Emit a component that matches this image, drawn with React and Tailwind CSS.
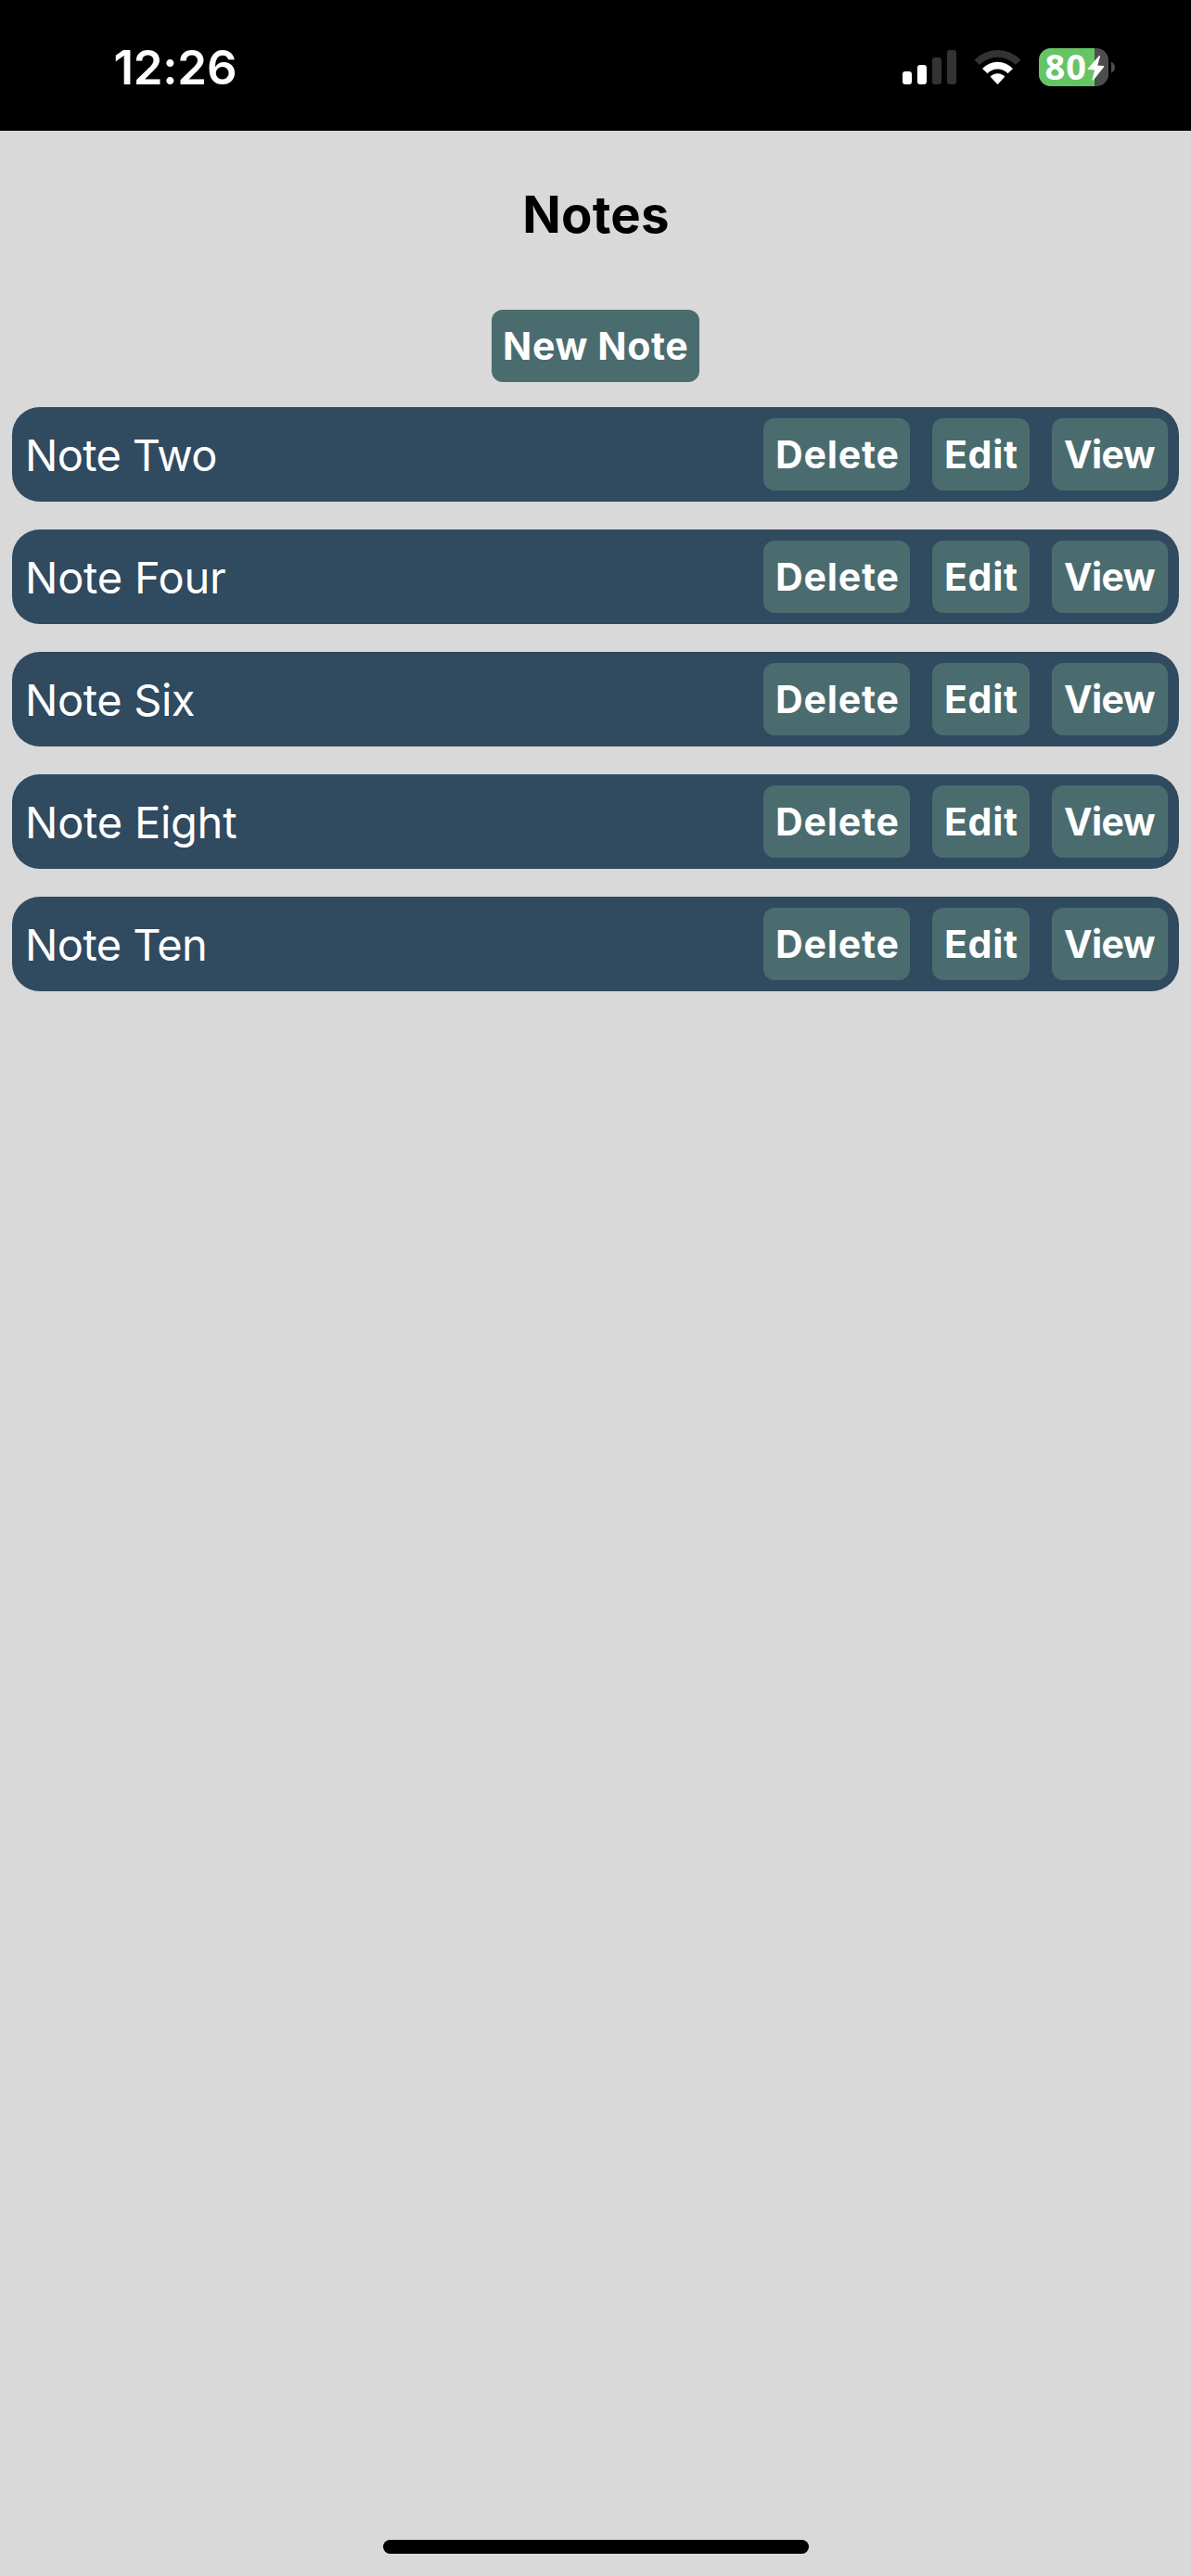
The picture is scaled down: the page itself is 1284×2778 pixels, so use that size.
const notes = [
  { title: 'Note Two', tracking: 'tracking-[-0.7px]' },
  { title: 'Note Four', tracking: 'tracking-[-0.25px]' },
  { title: 'Note Six', tracking: 'tracking-[-0.4px]' },
  { title: 'Note Eight', tracking: 'tracking-[-0.25px]' },
  { title: 'Note Ten', tracking: 'tracking-[-0.6px]' },
];

function Button({ className, children }) {
  return (
    <button
      type="button"
      className={`flex h-[78px] shrink-0 items-center rounded-[12px] bg-[#4a6c6f] text-[41px] leading-none font-bold whitespace-nowrap text-white ${className}`}
    >
      {children}
    </button>
  );
}

function SignalIcon() {
  return (
    <svg className="h-[37px] w-[58px]" viewBox="0 0 58 37" fill="#fff">
      <rect x="0" y="23" width="10" height="14" rx="3" />
      <rect x="16" y="16" width="10" height="21" rx="3" />
      <rect x="32" y="8" width="10" height="29" rx="3" fill="#333" />
      <rect x="48" y="0" width="10" height="37" rx="3" fill="#333" />
    </svg>
  );
}

function WifiIcon() {
  return (
    <svg className="ml-[19px] h-[37px] w-[51px]" viewBox="-0.5 0 51 37" fill="#fff">
      <path d="M0 10.5A35 35 0 0 1 50 10.5L44.5 15.9A27.5 27.5 0 0 0 5.5 15.9Z" fill="#333" />
      <path d="M8.5 20A22.4 22.4 0 0 1 41.5 20L36 25.3A15 15 0 0 0 14 25.3Z" />
      <path d="M17.2 28.8A10.4 10.4 0 0 1 32.8 28.8L25.6 36.4Q25 37 24.4 36.4Z" />
    </svg>
  );
}

function BatteryIcon() {
  return (
    <svg className="ml-[19px] h-[61px] w-[83px]" viewBox="0 -10 83 61">
      <clipPath id="battery-body">
        <rect width="75" height="41" rx="13" />
      </clipPath>
      <g clipPath="url(#battery-body)">
        <rect width="75" height="41" fill="#4d4d4d" />
        <rect width="60" height="41" fill="#65c466" />
      </g>
      <path d="M78 14.5Q82 16.5 82 20.5Q82 24.5 78 26.5Z" fill="#4d4d4d" />
      <text x="6.6" y="34" fill="#fff" fontFamily="Open Sans, sans-serif" fontWeight="700" fontSize="38" textLength="44.5">
        80
      </text>
      <path
        d="M65.3 8.8L53.3 22.4L61 22.9L58.2 34L69.7 19.6L62.4 19.1Z"
        fill="#fff"
        stroke="#fff"
        strokeWidth="1.4"
        strokeLinejoin="round"
      />
    </svg>
  );
}

export default function App() {
  return (
    <div className="flex h-[2778px] w-[1284px] flex-col bg-[#d9d9d9] font-[Inter,sans-serif]">
      <div className="flex h-[141px] shrink-0 items-start justify-between bg-black pr-[81px] pl-[122.5px]">
        <span className="mt-[47px] text-[51px] leading-[51px] font-semibold tracking-[-0.25px] text-white">12:26</span>
        <div className="mt-[42px] flex h-[61px] items-center">
          <SignalIcon />
          <WifiIcon />
          <BatteryIcon />
        </div>
      </div>

      <h1 className="mt-[61px] pl-px text-center text-[54.5px] leading-[58px] font-bold tracking-[0.2px] text-black">
        Notes
      </h1>

      <Button className="mt-[74px] w-[224px] self-center pl-[12px] tracking-[0.65px]">New Note</Button>

      <ul className="mt-[27px] flex flex-col gap-[30px] px-[13px]">
        {notes.map((note) => (
          <li
            key={note.title}
            className="flex h-[102px] items-center rounded-[30px] bg-[#304a60] pr-[12px] pl-[14px]"
          >
            <span className={`flex-1 text-[47px] leading-none text-white ${note.tracking}`}>{note.title}</span>
            <div className="flex gap-[24px]">
              <Button className="w-[158px] pl-[13px] tracking-[0.85px]">Delete</Button>
              <Button className="w-[105px] pl-[13px] tracking-[0.7px]">Edit</Button>
              <Button className="w-[125px] pl-[13px] tracking-[-0.6px]">View</Button>
            </div>
          </li>
        ))}
      </ul>

      <div className="mt-auto mb-[24px] ml-[413px] h-[15px] w-[459px] rounded-full bg-black" />
    </div>
  );
}
